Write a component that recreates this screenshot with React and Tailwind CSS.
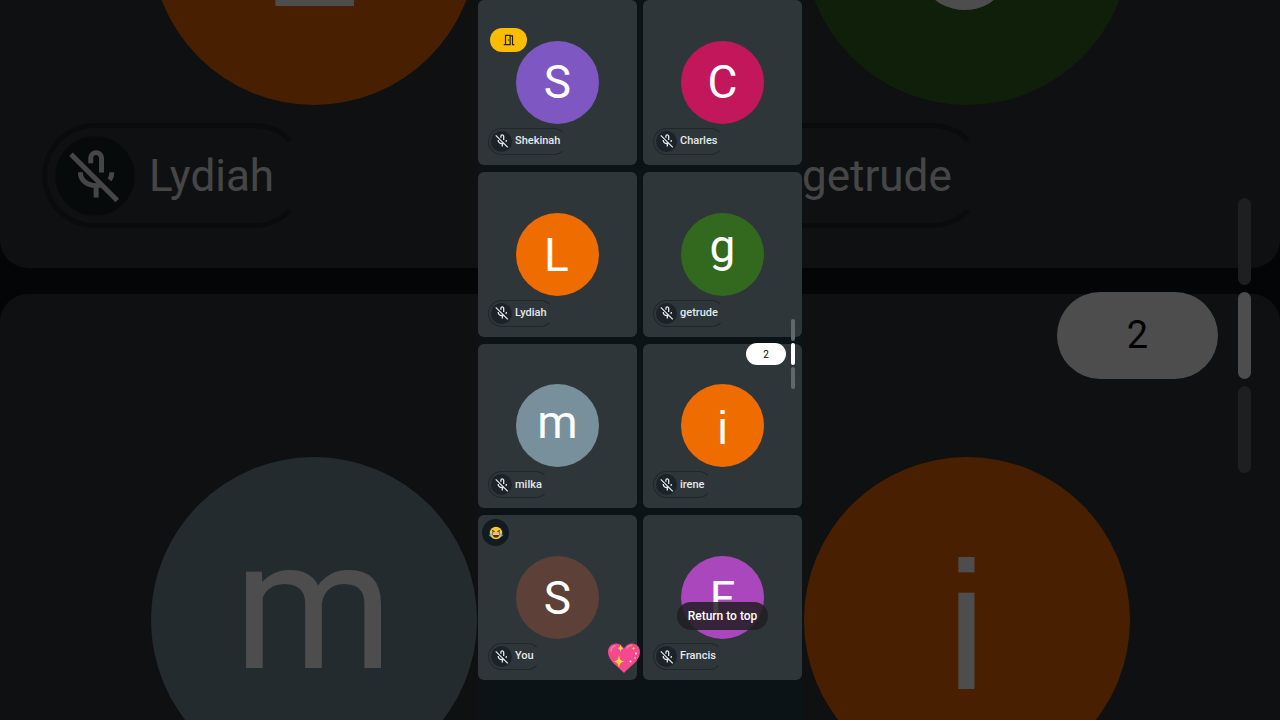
import React from "react";
import { MdOutlineMeetingRoom } from "react-icons/md";

const people = [
  { name: "Shekinah", letter: "S", color: "bg-[#7e57c2]", waiting: true },
  { name: "Charles", letter: "C", color: "bg-[#c2185b]" },
  { name: "Lydiah", letter: "L", color: "bg-[#ef6c00]" },
  { name: "getrude", letter: "g", color: "bg-[#33691e]" },
  { name: "milka", letter: "m", color: "bg-[#78909c]" },
  { name: "irene", letter: "i", color: "bg-[#ef6c00]" },
  { name: "You", letter: "S", color: "bg-[#5d4037]", laughing: true },
  { name: "Francis", letter: "F", color: "bg-[#ab47bc]", returnToTop: true },
];

// letterPad centres the initials by their drawn shape instead of the line box
const sizes = {
  small: {
    tile: "rounded-md",
    avatar: "size-[83px] text-[46px]",
    letterPad: {
      g: "pb-4",
      m: "pb-2",
      L: "pr-[2px] pt-[2px]",
      i: "pt-1 font-['Liberation_Sans',sans-serif]",
    },
    pill: "bottom-[10px] left-[10px] h-[27px] gap-[3px] border pl-[2px] pr-[6px] text-[11px] font-medium",
    mic: "size-[21px]",
    micIcon: "size-[14px]",
    pager: "right-[7px] gap-[5px]",
    page: "h-[22px] w-10 text-[10px]",
    bars: "gap-[2px]",
    bar: "h-[22px] w-1",
  },
  large: {
    tile: "rounded-[28px]",
    avatar: "size-[326px] text-[182px]",
    letterPad: {
      g: "pb-16",
      m: "pb-7",
      L: "pr-2 pt-1",
      i: "pt-3 font-['Liberation_Sans',sans-serif]",
    },
    pill: "bottom-10 left-[42px] h-[105px] gap-[14px] border-[5px] pl-2 pr-7 text-[44px]",
    mic: "size-20",
    micIcon: "size-[54px]",
    pager: "right-[29px] gap-5",
    page: "h-[87px] w-[161px] text-[38px]",
    bars: "gap-[7px]",
    bar: "h-[87px] w-[13px]",
  },
};

function MicOff({ className }) {
  return (
    <svg
      viewBox="0.5 0.3 24 24"
      fill="none"
      stroke="currentColor"
      strokeWidth="2.2"
      className={className}
    >
      <path d="M10.6 6.6V4.3a2.4 2.4 0 0 1 4.8 0v6.4" />
      <path d="M6 10.6c0 3.6 3 6 7 6 .9 0 1.8-.1 2.6-.4M20 10.6c0 1.4-.3 2.4-1 3.4M13 16.600v5.200" />
      <path d="M1.800 2.600 22.400 23.200" />
    </svg>
  );
}

function Laughing() {
  return (
    <svg viewBox="0 0 28 28" className="size-[14px]">
      <circle cx="14" cy="14" r="12.500" fill="#fcc934" />
      <path
        d="M6 8.500l5 2.500-5 1.500M22 8.500 17 11l5 1.500"
        fill="none"
        stroke="#4a3410"
        strokeWidth="1.800"
      />
      <path d="M6.500 15h15c0 5-3.300 8.500-7.500 8.500S6.500 20 6.500 15z" fill="#5a2e1a" />
      <path d="M8 15h12v2.500H8z" fill="#fff" />
      <path d="M5.500 14.500C2 15 .5 17 .5 19s3.500 3 4.500 0c.5-1.500.5-3 .5-4.500zM22.500 14.500c3.500.5 5 2.500 5 4.500s-3.500 3-4.500 0c-.5-1.500-.5-3-.5-4.500z" fill="#4fb8e8" />
    </svg>
  );
}

function SparklingHeart({ className }) {
  return (
    <svg viewBox="0 0 32 30" className={className}>
      <path
        d="M16 5.500C13.500 1.500 10.500.5 8 .5 3.500.5 0 4 0 9c0 8.500 9 13.500 16 21 7-7.500 16-12.500 16-21 0-5-3.500-8.500-8-8.500-2.500 0-5.500 1-8 5z"
        fill="#f4498c"
      />
      <path
        d="M3 8c0-3 2-4.500 4-5M19 5c1-2 3-2.500 4.500-2.500"
        fill="none"
        stroke="#fb7fae"
        strokeWidth="1.500"
        strokeLinecap="round"
      />
      <path d="M11 12.500c.8 4 1.500 5 5 6-3.500 1-4.200 2-5 6-.8-4-1.500-5-5-6 3.500-1 4.200-2 5-6z" fill="#fdd835" />
      <path d="M12.500 1.500c.5 2.500 1 3 3 3.700-2 .7-2.500 1.300-3 3.800-.5-2.500-1-3.100-3-3.800 2-.7 2.500-1.200 3-3.700z" fill="#fdd835" />
      <path d="M25.500 3.500c.3 1.300.6 1.700 1.800 2-1.200.3-1.500.7-1.800 2-.3-1.300-.6-1.700-1.800-2 1.200-.3 1.500-.7 1.800-2z" fill="#fdd835" />
      <circle cx="22.500" cy="18.500" r="1" fill="#fff" />
      <circle cx="28" cy="10.500" r=".9" fill="#fff" />
      <circle cx="27" cy="15" r=".7" fill="#fff" />
    </svg>
  );
}

function Tile({ person, size }) {
  const s = sizes[size];

  return (
    <div
      className={
        "relative flex items-center justify-center bg-[#2f3639] " + s.tile
      }
    >
      <div
        className={
          "flex items-center justify-center rounded-full leading-none text-white " +
          s.avatar +
          " " +
          person.color +
          " " +
          (s.letterPad[person.letter] || "")
        }
      >
        {person.letter}
      </div>
      <div
        className={
          "absolute flex items-center rounded-full border-[#1e272b] border-r-transparent text-[#e6e8e9] " +
          s.pill
        }
      >
        <span
          className={
            "flex shrink-0 items-center justify-center rounded-full bg-[#1a2327] " +
            s.mic
          }
        >
          <MicOff className={s.micIcon} />
        </span>
        {person.name}
      </div>
      {person.waiting && (
        <div className="absolute left-3 top-7 flex h-6 w-[37px] items-center justify-center rounded-full bg-[#fbbc04] text-[#241c05]">
          <MdOutlineMeetingRoom className="size-[14px]" />
        </div>
      )}
      {person.laughing && (
        <div className="absolute left-1 top-1 flex size-[27px] items-center justify-center rounded-full bg-[#111b20]">
          <Laughing />
        </div>
      )}
      {person.returnToTop && (
        <button className="absolute bottom-[50px] h-7 whitespace-nowrap rounded-full bg-[#201e22]/85 px-[11px] text-[12px] font-medium text-white">
          Return to top
        </button>
      )}
    </div>
  );
}

function Pager({ size, className }) {
  const s = sizes[size];

  return (
    <div className={"absolute flex items-center " + s.pager + " " + className}>
      <div
        className={
          "flex items-center justify-center rounded-full bg-white text-black " +
          s.page
        }
      >
        2
      </div>
      <div className={"flex flex-col " + s.bars}>
        <div className={"rounded-full bg-[#62676a] " + s.bar}></div>
        <div className={"rounded-full bg-white " + s.bar}></div>
        <div className={"rounded-full bg-[#62676a] " + s.bar}></div>
      </div>
    </div>
  );
}

function Backdrop() {
  return (
    <div aria-hidden="true" className="absolute inset-0 overflow-hidden bg-black">
      <div className="relative h-full bg-[#0b1317] opacity-30">
        <div className="-mt-96 grid auto-rows-[652px] grid-cols-2 gap-[26px]">
          {people.slice(2, 6).map((person) => (
            <Tile key={person.name} person={person} size="large" />
          ))}
        </div>
        <Pager size="large" className="top-[582px]" />
      </div>
    </div>
  );
}

export default function App() {
  return (
    <div className="relative flex h-screen justify-center overflow-hidden bg-black font-['Roboto',sans-serif]">
      <Backdrop />
      <main className="relative flex aspect-[9/20] h-full flex-col bg-[#0b1317]">
        <div className="grid flex-1 grid-cols-2 grid-rows-4 gap-x-[6px] gap-y-[7px]">
          {people.map((person) => (
            <Tile key={person.name} person={person} size="small" />
          ))}
        </div>
        <div className="h-10"></div>
        <Pager size="small" className="top-[319px]" />
        <SparklingHeart className="absolute bottom-[47px] left-[130px] w-8" />
      </main>
    </div>
  );
}
